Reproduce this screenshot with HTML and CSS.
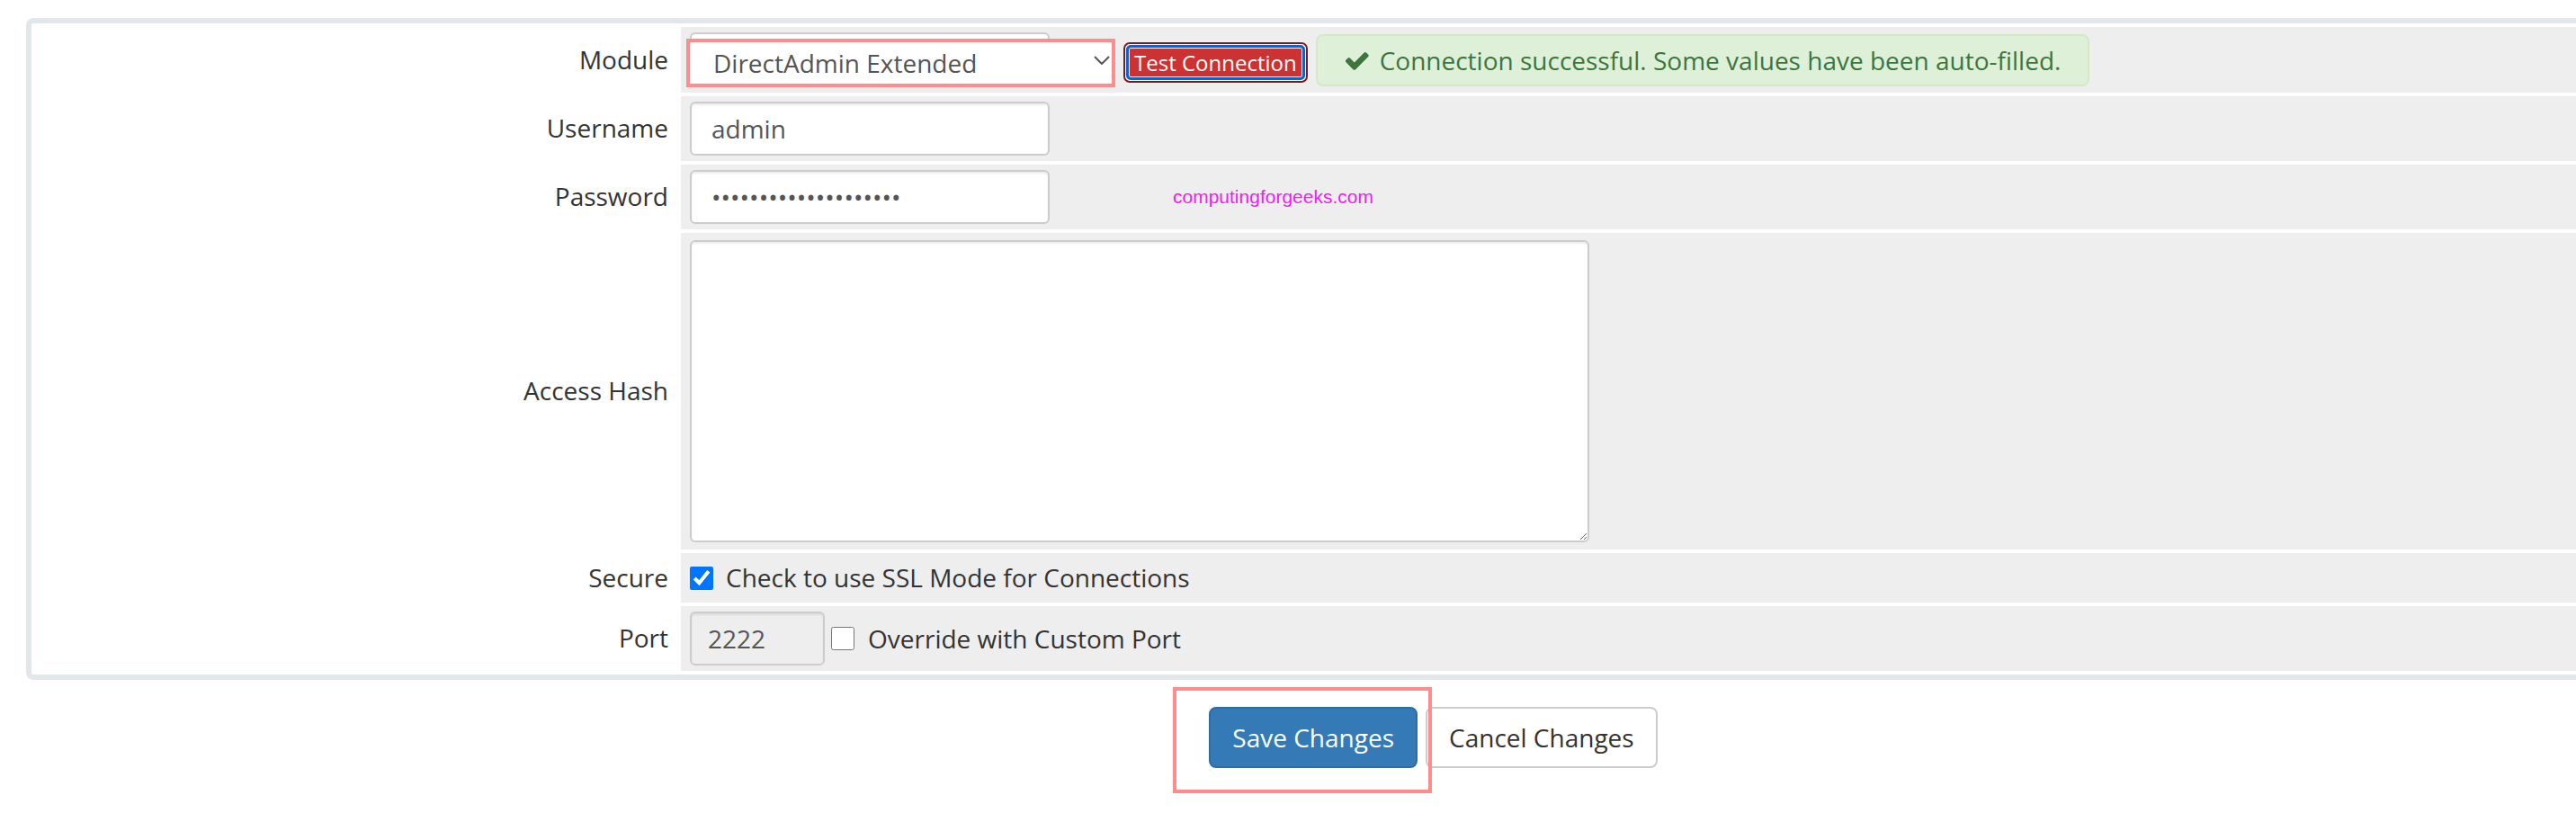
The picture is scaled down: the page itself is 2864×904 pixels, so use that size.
FILE: index.html
```html
<!DOCTYPE html>
<html lang="en">
<head>
    <meta charset="UTF-8">
    <title>Server Module Settings</title>
    <link rel="stylesheet" href="styles.css">
</head>
<body>

<div class="page">
    <div class="panel">
        <div class="form-grid">
            <div class="field-label">Module</div>
            <div class="field-area">
                <div class="select-wrap">
                    <select class="module-select">
                        <option selected>DirectAdmin Extended</option>
                    </select>
                    <svg class="chevron" width="18" height="10" viewBox="0 0 18 10">
                        <polyline points="1,1 9,9 17,1" fill="none" stroke="#555" stroke-width="2"/>
                    </svg>
                </div>
                <button class="btn-test"><span>Test Connection</span></button>
                <div class="alert-success">
                    <svg class="check" width="26" height="22" viewBox="128 300 1560 1140">
                        <path fill="#3c763d" d="M1671 566q0 40-28 68l-724 724-136 136q-28 28-68 28t-68-28l-136-136-362-362q-28-28-28-68t28-68l136-136q28-28 68-28t68 28l294 295 656-657q28-28 68-28t68 28l136 136q28 28 28 68z"/>
                    </svg>
                    Connection successful. Some values have been auto-filled.
                </div>
            </div>

            <div class="field-label">Username</div>
            <div class="field-area">
                <input type="text" class="text-input" value="admin">
            </div>

            <div class="field-label">Password</div>
            <div class="field-area">
                <input type="password" class="text-input" value="xxxxxxxxxxxxxxxxxxxx">
                <span class="watermark">computingforgeeks.com</span>
            </div>

            <div class="field-label">Access Hash</div>
            <div class="field-area">
                <textarea class="hash-input"></textarea>
            </div>

            <div class="field-label">Secure</div>
            <div class="field-area">
                <label class="check-label">
                    <input type="checkbox" class="checkbox" checked>
                    Check to use SSL Mode for Connections
                </label>
            </div>

            <div class="field-label">Port</div>
            <div class="field-area">
                <input type="text" class="text-input port-input" value="2222" readonly>
                <label class="check-label">
                    <input type="checkbox" class="checkbox port-check">
                    Override with Custom Port
                </label>
            </div>
        </div>
    </div>

    <div class="actions">
        <span class="marked">
            <button class="btn btn-primary">Save Changes</button>
        </span>
        <button class="btn btn-default">Cancel Changes</button>
    </div>
</div>

</body>
</html>
```

FILE: styles.css
```css
body {
    margin: 0;
    font-family: "Open Sans", sans-serif;
    font-size: 28px;
    line-height: 1.42857;
    color: #333;
    background-color: #fff;
}
.page {
    padding: 20px 0 30px;
}
.panel {
    margin-left: 29px;
    padding: 4px 0 4px 4px;
    border: 6px solid #e2e7ea;
    border-right: none;
    border-radius: 8px 0 0 8px;
    background-color: #fff;
}
.form-grid {
    display: grid;
    grid-template-columns: 714px 1fr;
    gap: 4px;
}
.field-label {
    display: flex;
    align-items: center;
    justify-content: flex-end;
    padding-right: 10px;
}
.field-area {
    display: flex;
    align-items: center;
    padding: 6px 10px;
    background-color: #eee;
}
.select-wrap {
    position: relative;
    margin-left: -4px;
    padding-top: 7px;
}
.select-wrap::before {
    content: "";
    position: absolute;
    top: 0;
    left: 4px;
    width: 400px;
    height: 40px;
    box-sizing: border-box;
    border: 2px solid #ccc;
    border-radius: 6px;
    background-color: #fff;
}
.module-select {
    position: relative;
    display: block;
    width: 477px;
    height: 54px;
    padding: 0 26px;
    border: 4px solid #ff8d8d;
    border-radius: 0;
    background-color: #fff;
    font-family: inherit;
    font-size: 28px;
    color: #555;
    appearance: none;
    -webkit-appearance: none;
    outline: none;
}
.chevron {
    position: absolute;
    top: 26px;
    right: 6px;
}
.btn-test {
    align-self: flex-start;
    margin: 11px 0 0 9px;
    padding: 1px;
    border: 2px solid #7a1b1b;
    border-radius: 7px;
    background-color: #fff;
    font-family: inherit;
    font-size: 24px;
    cursor: pointer;
}
.btn-test span {
    display: block;
    padding: 0 6px;
    line-height: 33px;
    color: #fff;
    background-color: #cc3232;
    border: 3px solid #0a64cf;
    border-radius: 5px;
    box-shadow: inset 0 0 0 1px #fff;
}
.alert-success {
    display: flex;
    align-items: center;
    margin-left: 9px;
    padding: 7px 30px 7px 31px;
    line-height: 40px;
    color: #3c763d;
    background-color: #dff0d8;
    border: 2px solid #d6e9c6;
    border-radius: 8px;
}
.check {
    margin-right: 12px;
}
.text-input {
    box-sizing: border-box;
    width: 400px;
    height: 60px;
    padding: 0 22px;
    border: 2px solid #ccc;
    border-radius: 6px;
    box-shadow: inset 0 2px 2px rgba(0, 0, 0, 0.075);
    font-family: inherit;
    font-size: 28px;
    color: #555;
    background-color: #fff;
}
.port-input {
    width: 150px;
    padding: 0 18px;
    background-color: #eee;
}
.watermark {
    margin-left: 137px;
    font-family: "Liberation Sans", Arial, sans-serif;
    font-size: 21px;
    color: #f020f0;
}
.hash-input {
    display: block;
    box-sizing: border-box;
    width: 1000px;
    height: 336px;
    margin: 2px 0;
    padding: 12px 22px;
    border: 2px solid #ccc;
    border-radius: 6px;
    box-shadow: inset 0 2px 2px rgba(0, 0, 0, 0.075);
    font-family: inherit;
    font-size: 28px;
}
.check-label {
    display: flex;
    align-items: center;
    line-height: 43px;
}
.checkbox {
    width: 26px;
    height: 26px;
    margin: 0 14px 0 0;
}
.port-check {
    margin-left: 7px;
    margin-right: 15px;
}
.actions {
    display: flex;
    justify-content: center;
    gap: 9px;
    margin-top: 30px;
    padding-left: 323px;
}
.marked {
    position: relative;
}
.marked::after {
    content: "";
    position: absolute;
    top: -22px;
    left: -40px;
    right: -16px;
    bottom: -28px;
    border: 4px solid #ff8d8d;
    pointer-events: none;
}
.btn {
    display: block;
    padding: 12px 24px;
    border: 2px solid transparent;
    border-radius: 8px;
    font-family: inherit;
    font-size: 28px;
    line-height: 40px;
    cursor: pointer;
}
.btn-primary {
    color: #fff;
    background-color: #337ab7;
    border-color: #2e6da4;
}
.btn-default {
    color: #333;
    background-color: #fff;
    border-color: #ccc;
}
```
